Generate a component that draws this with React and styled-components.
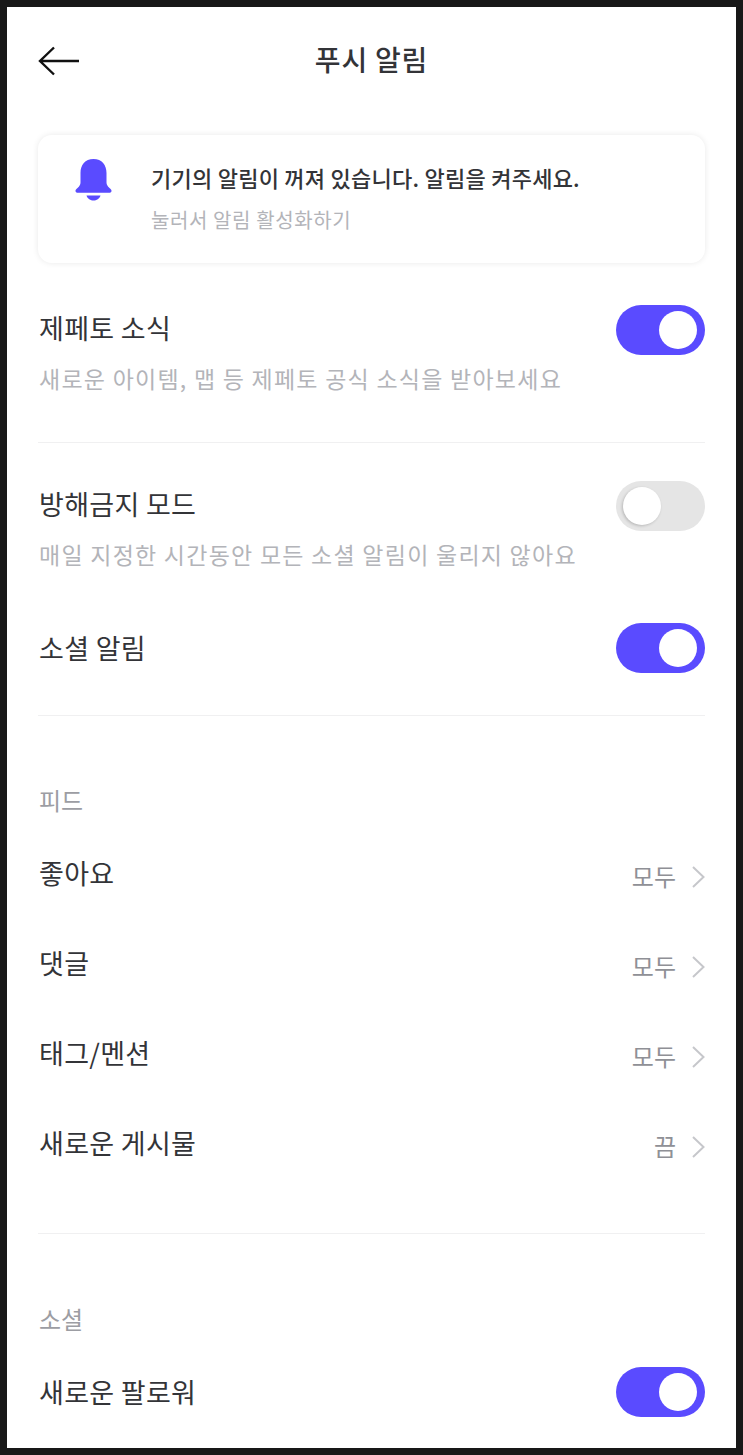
import React from "react";
import styled, { createGlobalStyle } from "styled-components";

const Global = createGlobalStyle`
  html, body { margin: 0; padding: 0; background: #181818; }
  * { box-sizing: border-box; }
`;

const Frame = styled.div`
  width: 743px;
  height: 1455px;
  padding: 7px;
  background: #181818;
  overflow: hidden;
`;

const Screen = styled.div`
  height: 1441px;
  background: #fff;
  padding: 0 31px;
  overflow: hidden;
  font-family: "Noto Sans CJK KR", "Noto Sans", sans-serif;
  color: #333438;
`;

const Header = styled.header`
  height: 106px;
  display: flex;
  align-items: center;
  justify-content: center;
  position: relative;
`;

const Back = styled.svg`
  position: absolute;
  left: 0;
  top: 39px;
`;

const Title = styled.h1`
  margin: 0 0 2px;
  font-size: 28px;
  font-weight: 500;
  letter-spacing: 0.8px;
  line-height: 1;
`;

const Notice = styled.div`
  height: 128px;
  margin-top: 22px;
  border-radius: 14px;
  background: #fff;
  box-shadow: 0 0 6px rgba(0, 0, 0, 0.09);
  display: flex;
  padding: 24px 0 0 37px;
`;

const NoticeText = styled.div`
  margin: 3px 0 0 39px;
`;

const NoticeTitle = styled.div`
  font-size: 22px;
  font-weight: 500;
  letter-spacing: 0.25px;
  line-height: 30px;
`;

const NoticeSub = styled.div`
  font-size: 20px;
  letter-spacing: 0.6px;
  line-height: 30px;
  margin-top: 13px;
  color: #b3b4b9;
`;

const Row = styled.div`
  display: flex;
  justify-content: space-between;
  align-items: center;
  height: ${(p) => p.$h || 90}px;
`;

const ToggleBlock = styled.div`
  display: flex;
  justify-content: space-between;
  align-items: flex-start;
  height: ${(p) => p.$h}px;
  padding-top: ${(p) => p.$pad}px;
`;

const LabelBlock = styled.div`
  padding-top: 3px;
`;

const Label = styled.div`
  margin-left: 1px;
  font-size: 27px;
  letter-spacing: 0.3px;
  line-height: 40px;
`;

const Desc = styled.div`
  margin: 14px 0 0 1px;
  font-size: 23px;
  letter-spacing: 1.25px;
  line-height: 32px;
  color: #b3b4b9;
`;

const Track = styled.div`
  width: 89px;
  height: 50px;
  border-radius: 25px;
  flex: none;
  position: relative;
  background: ${(p) => (p.$on ? "#5a4bff" : "#e5e5e5")};
`;

const Knob = styled.div`
  position: absolute;
  top: 6px;
  left: ${(p) => (p.$on ? "43px" : "7px")};
  width: 38px;
  height: 38px;
  border-radius: 50%;
  background: #fff;
  box-shadow: ${(p) => (p.$on ? "none" : "-1px 1px 3px rgba(0,0,0,0.2)")};
`;

const Divider = styled.div`
  height: 1px;
  background: #f0f0f1;
`;

const Section = styled.div`
  margin: ${(p) => p.$gap}px 0 0 1px;
  font-size: 24px;
  line-height: 32px;
  color: #9c9da3;
`;

const List = styled.div`
  padding: ${(p) => p.$top}px 0 ${(p) => p.$bottom}px;
`;

const Value = styled.div`
  display: flex;
  align-items: center;
  gap: 16px;
  margin-top: 4px;
  font-size: 24px;
  color: #8f9096;
  svg {
    margin-top: 3px;
  }
`;

const Toggle = ({ on }) => (
  <Track $on={on}>
    <Knob $on={on} />
  </Track>
);

const Bell = () => (
  <svg width="37" height="42" viewBox="0 0 36 42" style={{ flex: "none" }}>
    <path
      fill="#5a4bff"
      d="M18 0C9.500 0 5 6 5 14v9.500c0 2-1 3.600-3 5.600-1.800 1.300-2 2.100-2 2.900 0 1 1 1.800 2.400 1.800h31.200c1.400 0 2.400-.8 2.400-1.800 0-.8-.2-1.600-2-2.900-2-2-3-3.600-3-5.600V14C31 6 26.500 0 18 0z"
    />
    <path fill="#5a4bff" d="M11 36.500h14C24 40 21 41.500 18 41.500S12 40 11 36.500z" />
  </svg>
);

const Chevron = () => (
  <svg width="13" height="22" viewBox="0 0 13 22">
    <path d="M1 1l10.500 10L1 21" fill="none" stroke="#c6c7cb" strokeWidth="2" />
  </svg>
);

const LinkRow = ({ label, value }) => (
  <Row>
    <Label>{label}</Label>
    <Value>
      {value}
      <Chevron />
    </Value>
  </Row>
);

export default function App() {
  return (
    <Frame>
      <Global />
      <Screen>
        <Header>
          <Back width="42" height="30" viewBox="0 0 42 30">
            <path d="M41 15H2M16 1.500L2 15l14 13.500" fill="none" stroke="#111" strokeWidth="2.400" />
          </Back>
          <Title>푸시 알림</Title>
        </Header>

        <Notice>
          <Bell />
          <NoticeText>
            <NoticeTitle>기기의 알림이 꺼져 있습니다. 알림을 켜주세요.</NoticeTitle>
            <NoticeSub>눌러서 알림 활성화하기</NoticeSub>
          </NoticeText>
        </Notice>

        <ToggleBlock $h={179} $pad={42}>
          <LabelBlock>
            <Label>제페토 소식</Label>
            <Desc>새로운 아이템, 맵 등 제페토 공식 소식을 받아보세요</Desc>
          </LabelBlock>
          <Toggle on />
        </ToggleBlock>
        <Divider />
        <ToggleBlock $h={140} $pad={38}>
          <LabelBlock>
            <Label>방해금지 모드</Label>
            <Desc>매일 지정한 시간동안 모든 소셜 알림이 울리지 않아요</Desc>
          </LabelBlock>
          <Toggle />
        </ToggleBlock>
        <List $top={0} $bottom={2}>
          <Row $h={130}>
            <Label>소셜 알림</Label>
            <Toggle on />
          </Row>
        </List>
        <Divider />

        <Section $gap={68}>피드</Section>
        <List $top={12} $bottom={45}>
          <LinkRow label="좋아요" value="모두" />
          <LinkRow label="댓글" value="모두" />
          <LinkRow label="태그/멘션" value="모두" />
          <LinkRow label="새로운 게시물" value="끔" />
        </List>
        <Divider />

        <Section $gap={69}>소셜</Section>
        <List $top={12} $bottom={0}>
          <Row>
            <Label>새로운 팔로워</Label>
            <Toggle on />
          </Row>
        </List>
      </Screen>
    </Frame>
  );
}
